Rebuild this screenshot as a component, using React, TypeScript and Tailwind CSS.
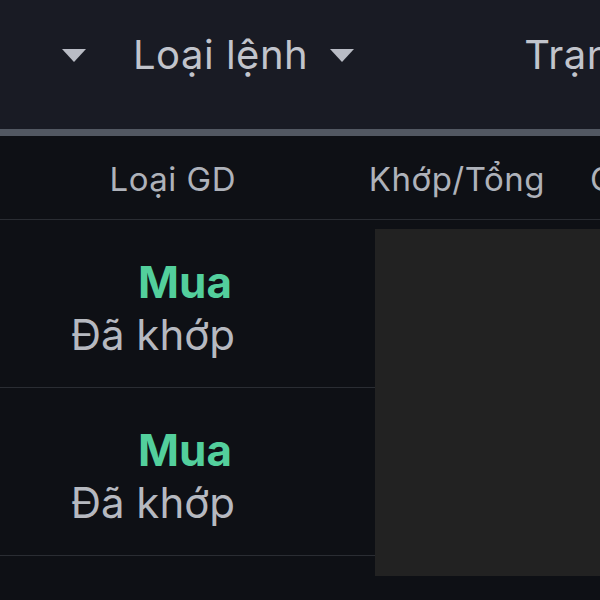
import React from "react";

const font = { fontFamily: "Inter, 'Noto Sans', sans-serif" };

function Caret({ className = "" }: { className?: string }) {
  return (
    <svg width="24" height="13" viewBox="0 0 24 13" className={className}>
      <path d="M0 0 H24 L12 13 Z" fill="#b9bcc5" />
    </svg>
  );
}

const rows = [
  { side: "Mua", status: "Đã khớp" },
  { side: "Mua", status: "Đã khớp" },
];

export default function App() {
  return (
    <div className="w-[600px] h-[600px] overflow-hidden bg-[#0e1015] relative" style={font}>
      {/* filter bar */}
      <div className="h-[129px] bg-[#191b24] flex items-start pt-[31px] whitespace-nowrap text-[#c1c4cc] text-[40px] leading-[48px] tracking-[0.5px]">
        <Caret className="ml-[62px] mt-[18px] shrink-0" />
        <span className="ml-[47px]">Loại lệnh</span>
        <Caret className="ml-[22px] mt-[18px] shrink-0" />
        <span className="ml-[170px]">Trạng thái</span>
      </div>
      <div className="h-[7px] bg-[#525862]" />

      {/* table header */}
      <div className="h-[84px] flex items-start pt-[23px] border-b border-[#2a2d33] text-[33px] leading-[40px] text-[#aeb2ba] whitespace-nowrap tracking-[0.5px]">
        <div className="w-[260px] pr-[24px] text-right shrink-0">Loại GD</div>
        <div className="w-[310px] pr-[25px] text-right shrink-0">Khớp/Tổng</div>
        <div className="pl-[20px]">Giá</div>
      </div>

      {/* rows */}
      {rows.map((r, i) => (
        <div key={i} className="h-[168px] flex items-start pt-[36px] border-b border-[#2a2d33]">
          <div className="w-[260px] pr-[25px] text-right shrink-0">
            <div className="text-[44px] leading-[52px] font-bold text-[#53cf9c] pr-[3px]">{r.side}</div>
            <div className="text-[42px] leading-[54px] text-[#b6b9c0]">{r.status}</div>
          </div>
        </div>
      ))}

      {/* loading overlay */}
      <div className="absolute left-[375px] top-[229px] w-[225px] h-[347px] bg-[#222222]" />
    </div>
  );
}
